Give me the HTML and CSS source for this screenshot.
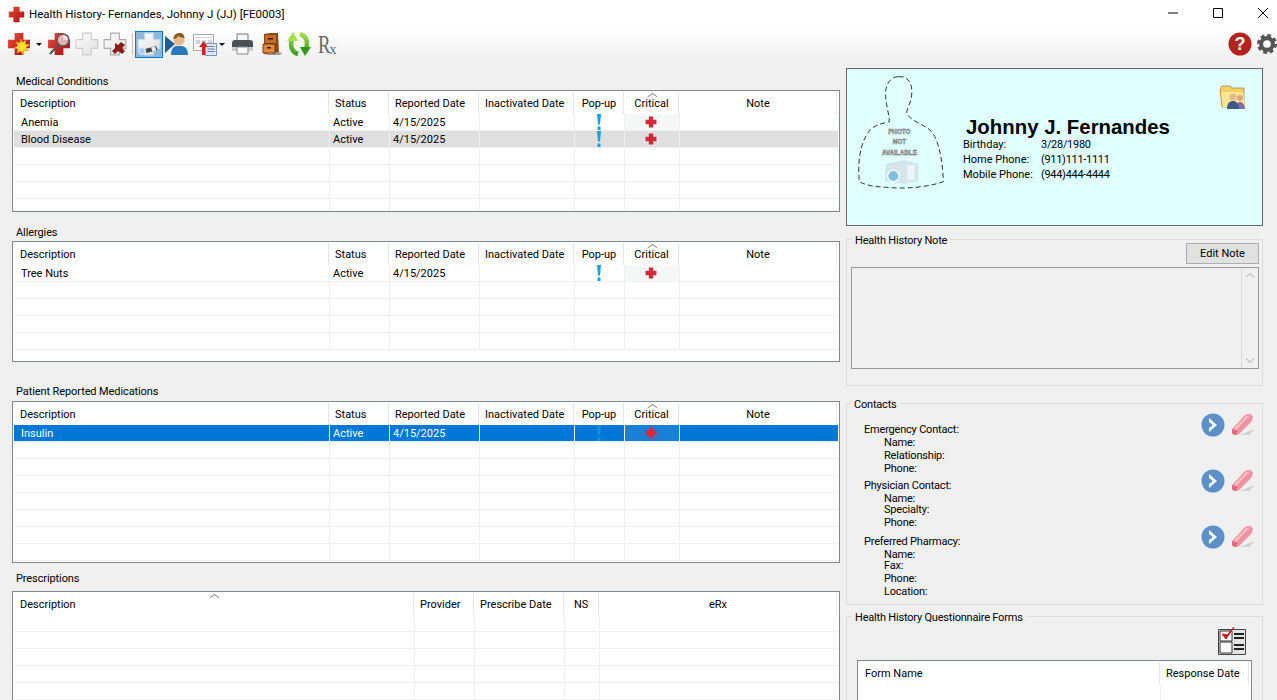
FILE: index.html
```html
<!DOCTYPE html>
<html lang="en">
<head>
	<meta charset="UTF-8">
	<title>Health History</title>
	<link rel="stylesheet" href="styles.css">
</head>
<body>
	<svg class="defs" width="0" height="0">
		<defs>
			<linearGradient id="red" x1="0" y1="0" x2="1" y2="1">
				<stop offset="0" stop-color="#ec4a3c"/>
				<stop offset="1" stop-color="#a50d10"/>
			</linearGradient>
			<linearGradient id="pale" x1="0" y1="0" x2="1" y2="1">
				<stop offset="0" stop-color="#ffffff"/>
				<stop offset="1" stop-color="#dcdcdc"/>
			</linearGradient>
			<linearGradient id="green" gradientUnits="userSpaceOnUse" x1="0" y1="0" x2="0" y2="24">
				<stop offset="0" stop-color="#a6e04a"/>
				<stop offset="1" stop-color="#2f9a1c"/>
			</linearGradient>
			<symbol id="cross" viewBox="1 1 22 22">
				<path d="M8 2h8v6h6v8h-6v6H8v-6H2V8h6z" stroke-linejoin="round"/>
			</symbol>
			<symbol id="bang" viewBox="0 0 6 16">
				<path d="M1 0h4L4 10.500H2zM1.500 12.500h3V16h-3z"/>
			</symbol>
			<symbol id="go" viewBox="0 0 24 24">
				<circle cx="12" cy="12" r="11.500" fill="#5b90c8"/>
				<path d="M8 5l8 7-8 7v-4l4-3-4-3z" fill="#fff"/>
			</symbol>
			<symbol id="eraser" viewBox="0 0 24 24">
				<path d="M9 22l15-6-6 6z" fill="#cfcfcf"/>
				<path d="M1 16L14 2q2-1 5-1l3 2-1 5L9 20q-3 3-6 2l-2-2z" fill="#f2919f"/>
				<path d="M3 15L15 3l4-.5-2 2L5 17z" fill="#f8bcc5"/>
				<path d="M1 16l6 2-3 4-1 0-2-2z" fill="#e0687e"/>
			</symbol>
		</defs>
	</svg>

	<div class="titlebar">
		<svg class="app-icon" width="17" height="17"><use href="#cross" fill="url(#red)"/></svg>
		<span class="title">Health History- Fernandes, Johnny J (JJ) [FE0003]</span>
		<div class="win-btns">
			<svg width="10" height="10" viewBox="0 0 10 10"><path d="M0 5h10" stroke="#000"/></svg>
			<svg width="10" height="10" viewBox="0 0 10 10"><path d="M.5.5h9v9h-9z" fill="none" stroke="#000"/></svg>
			<svg width="10" height="10" viewBox="0 0 10 10"><path d="M0 0l10 10M10 0L0 10" stroke="#000"/></svg>
		</div>
	</div>

	<div class="toolbar">
		<svg class="tool" width="24" height="24" viewBox="0 0 24 24">
			<use href="#cross" fill="url(#red)" width="24" height="24"/>
			<path d="M14 7l1.500 3.500L19 8l-1 4 5 1-4 2 2 4-4-1-1 5-2-4-4 2 1-4-4-1 4-2-2-4 4 1z" fill="#ffe22e" stroke="#f08a18" stroke-width=".7"/>
		</svg>
		<span class="caret"></span>
		<svg class="tool" width="24" height="24" viewBox="0 0 24 24">
			<use href="#cross" fill="url(#red)" width="24" height="24"/>
			<circle cx="16" cy="8" r="6" fill="#f4dcdc" fill-opacity=".75" stroke="#555" stroke-width="1.600"/>
			<path d="M11.500 12.500L3 22" stroke="#555" stroke-width="2.200"/>
		</svg>
		<svg class="tool" width="24" height="24" viewBox="0 0 24 24"><use href="#cross" fill="url(#pale)" stroke="#ccc" width="24" height="24"/></svg>
		<svg class="tool tool-last" width="24" height="24" viewBox="0 0 24 24">
			<use href="#cross" fill="url(#pale)" stroke="#aaa" width="24" height="24"/>
			<path d="M12 11l3 2 3-3 4 3-3 3 3 3-3 3-4-3-3 3-3-3 3-3z" fill="#8e1c14"/>
		</svg>
		<span class="sep"></span>
		<span class="tool-on">
			<svg width="24" height="24" viewBox="0 0 24 24">
				<use href="#cross" fill="url(#pale)" stroke="#c8d8e8" width="24" height="24"/>
				<path d="M8 17l11-3 1.500 4-11 3z" fill="#444"/>
				<path d="M14 15.500l4-1 1.500 4-4 1z" fill="#eee"/>
				<circle cx="5" cy="19" r="3.500" fill="#a8d0f0" stroke="#eef"/>
			</svg>
		</span>
		<svg class="tool tool-person" width="24" height="24" viewBox="0 0 24 24">
			<path d="M0 4l10 8-10 9z" fill="#1f5f96"/>
			<path d="M6 23c0-7 3-9 6-9h4c4 0 7 3 7 9z" fill="#2a78c0"/>
			<circle cx="14" cy="8" r="5.500" fill="#e8b888"/>
			<path d="M8.500 7c0-4 3-6 6-6s5 2 5 5c-3 0-6-2-7-2 0 2-2 3-4 3z" fill="#8a5a20"/>
		</svg>
		<svg class="tool-form" width="24" height="24" viewBox="0 0 24 24">
			<path d="M.500 2.500h20v16H.500z" fill="#fff" stroke="#aaa"/>
			<path d="M2 5h17v1H2zM3 8h4v4H3zM9 8h4v4H9zM15 8h4v4h-4z" fill="#cfd4dc"/>
			<path d="M12.500 11.500h11v12h-11z" fill="#dce6f4" stroke="#7f95b8"/>
			<path d="M14.500 14.500h7M14.500 17h7M14.500 19.500h7" stroke="#6a7fa0"/>
			<path d="M9 23v-8H6l4.500-6 4.500 6h-3v8z" fill="#d81e1e"/>
		</svg>
		<span class="caret caret-form"></span>
		<svg class="tool-print" width="24" height="24" viewBox="0 0 24 24">
			<path d="M6 2h11v7H6z" fill="#f6f6f6" stroke="#777"/>
			<path d="M1 11c0-2 1-3 3-3h15c2 0 3 1 3 3v7H1z" fill="#48505a"/>
			<path d="M1 15h21v4H1z" fill="#c8ccd0"/>
			<path d="M6 15h11v7H6z" fill="#fafafa" stroke="#888"/>
		</svg>
		<svg class="tool-cabinet" width="20" height="24" viewBox="0 0 20 24">
			<path d="M2 23l16 0 2-2-4-1z" fill="#999"/>
			<path d="M2 2l6-1h8l1 19-15 2z" fill="#8a4a18"/>
			<path d="M3 3h11v8H3z" fill="#c46a22"/>
			<path d="M1 12h12v9H1z" fill="#e08a38" stroke="#5a2a08" stroke-width=".8"/>
			<path d="M6 6h5v1.500H6zM5 15h4v1.500H5z" fill="#3a1a04"/>
		</svg>
		<svg class="tool-green" width="24" height="24" viewBox="0 0 24 24">
			<path d="M11 22C4 20 3 13 5 7" fill="none" stroke="url(#green)" stroke-width="4.500"/>
			<path d="M0 9L6 0l5 9z" fill="#a6e04a"/>
			<path d="M13 2c7 2 8 9 6 15" fill="none" stroke="url(#green)" stroke-width="4.500"/>
			<path d="M13 15h11l-6 9z" fill="#2f9a1c"/>
		</svg>
		<svg class="tool-rx" width="20" height="24" viewBox="0 0 20 24">
			<text class="rx-r" transform="scale(.72 1)" x="0" y="21">R</text>
			<text class="rx-x" x="11.500" y="22">x</text>
		</svg>
		<div class="tool-right">
			<svg width="24" height="24" viewBox="0 0 24 24">
				<circle cx="12" cy="12" r="11.500" fill="#b5211c"/>
				<text class="help-q" x="12" y="18">?</text>
			</svg>
			<svg width="20" height="22" viewBox="0 0 22 22">
				<circle cx="11" cy="11" r="6.500" fill="none" stroke="#555" stroke-width="4.500"/>
				<circle cx="11" cy="11" r="9.500" fill="none" stroke="#555" stroke-width="3" stroke-dasharray="4.200 3.260"/>
			</svg>
		</div>
	</div>

	<div class="main">
		<div class="left">
			<div class="section">
				<p class="sec-label">Medical Conditions</p>
				<div class="grid-box h-med">
					<table class="grid">
						<colgroup><col class="c1"><col class="c2"><col class="c3"><col class="c4"><col class="c5"><col class="c6"><col></colgroup>
						<tr><th>Description</th><th>Status</th><th>Reported Date</th><th>Inactivated Date</th><th class="mid">Pop-up</th><th class="mid sorted">Critical</th><th class="mid">Note</th></tr>
						<tr><td class="first">Anemia</td><td>Active</td><td>4/15/2025</td><td></td><td class="mid"><svg class="bang" width="6" height="16"><use href="#bang"/></svg></td><td class="mid crit"><svg class="plus" width="12" height="12"><use href="#cross"/></svg></td><td></td></tr>
						<tr class="row-gray"><td class="first">Blood Disease</td><td>Active</td><td>4/15/2025</td><td></td><td class="mid"><svg class="bang" width="6" height="16"><use href="#bang"/></svg></td><td class="mid"><svg class="plus" width="12" height="12"><use href="#cross"/></svg></td><td></td></tr>
						<tr><td></td><td></td><td></td><td></td><td></td><td></td><td></td></tr>
						<tr><td></td><td></td><td></td><td></td><td></td><td></td><td></td></tr>
						<tr><td></td><td></td><td></td><td></td><td></td><td></td><td></td></tr>
						<tr><td></td><td></td><td></td><td></td><td></td><td></td><td></td></tr>
					</table>
				</div>
			</div>

			<div class="section sec-allergies">
				<p class="sec-label">Allergies</p>
				<div class="grid-box h-all">
					<table class="grid">
						<colgroup><col class="c1"><col class="c2"><col class="c3"><col class="c4"><col class="c5"><col class="c6"><col></colgroup>
						<tr><th>Description</th><th>Status</th><th>Reported Date</th><th>Inactivated Date</th><th class="mid">Pop-up</th><th class="mid sorted">Critical</th><th class="mid">Note</th></tr>
						<tr><td class="first">Tree Nuts</td><td>Active</td><td>4/15/2025</td><td></td><td class="mid"><svg class="bang" width="6" height="16"><use href="#bang"/></svg></td><td class="mid crit"><svg class="plus" width="12" height="12"><use href="#cross"/></svg></td><td></td></tr>
						<tr><td></td><td></td><td></td><td></td><td></td><td></td><td></td></tr>
						<tr><td></td><td></td><td></td><td></td><td></td><td></td><td></td></tr>
						<tr><td></td><td></td><td></td><td></td><td></td><td></td><td></td></tr>
						<tr><td></td><td></td><td></td><td></td><td></td><td></td><td></td></tr>
					</table>
				</div>
			</div>

			<div class="section sec-meds">
				<p class="sec-label">Patient Reported Medications</p>
				<div class="grid-box h-meds">
					<table class="grid">
						<colgroup><col class="c1"><col class="c2"><col class="c3"><col class="c4"><col class="c5"><col class="c6"><col></colgroup>
						<tr><th>Description</th><th>Status</th><th>Reported Date</th><th>Inactivated Date</th><th class="mid">Pop-up</th><th class="mid sorted">Critical</th><th class="mid">Note</th></tr>
						<tr class="row-sel"><td class="first">Insulin</td><td>Active</td><td>4/15/2025</td><td></td><td class="mid"><svg class="bang" width="6" height="16"><use href="#bang"/></svg></td><td class="mid crit"><svg class="plus" width="12" height="12"><use href="#cross"/></svg></td><td></td></tr>
						<tr><td></td><td></td><td></td><td></td><td></td><td></td><td></td></tr>
						<tr><td></td><td></td><td></td><td></td><td></td><td></td><td></td></tr>
						<tr><td></td><td></td><td></td><td></td><td></td><td></td><td></td></tr>
						<tr><td></td><td></td><td></td><td></td><td></td><td></td><td></td></tr>
						<tr><td></td><td></td><td></td><td></td><td></td><td></td><td></td></tr>
						<tr><td></td><td></td><td></td><td></td><td></td><td></td><td></td></tr>
						<tr><td></td><td></td><td></td><td></td><td></td><td></td><td></td></tr>
					</table>
				</div>
			</div>

			<div class="section sec-rx">
				<p class="sec-label">Prescriptions</p>
				<div class="grid-box h-rx">
					<table class="grid">
						<colgroup><col class="p1"><col class="p2"><col class="p3"><col class="p4"><col></colgroup>
						<tr><th class="sorted">Description</th><th>Provider</th><th>Prescribe Date</th><th class="ns">NS</th><th class="mid">eRx</th></tr>
						<tr><td></td><td></td><td></td><td></td><td></td></tr>
						<tr><td></td><td></td><td></td><td></td><td></td></tr>
						<tr><td></td><td></td><td></td><td></td><td></td></tr>
						<tr><td></td><td></td><td></td><td></td><td></td></tr>
						<tr><td></td><td></td><td></td><td></td><td></td></tr>
					</table>
				</div>
			</div>
		</div>

		<div class="right">
			<div class="card">
				<svg class="photo" width="110" height="125" viewBox="0 0 330 375">
					<path class="outline" d="M145 20C175 18 188 40 185 75C183 100 170 115 170 130C185 155 215 160 240 180C262 200 278 260 280 335C240 350 170 358 110 352C70 350 45 345 28 335C22 280 30 215 60 180C80 160 105 160 118 155C118 130 105 100 107 65C108 40 125 20 145 20Z"/>
					<text class="photo-txt" x="148" y="192">PHOTO</text>
					<text class="photo-txt" x="148" y="222">NOT</text>
					<text class="photo-txt" x="148" y="254">AVAILABLE</text>
					<path d="M108 282l55-10 40 10v50l-40 8-55-6z" fill="#d4e6ec" stroke="#b8d0d8"/>
					<circle cx="130" cy="318" r="17" fill="#7fc0e0" stroke="#fff" stroke-width="4"/>
					<path d="M172 285h22v44h-22z" fill="#eef6f8"/>
				</svg>
				<div class="info">
					<div class="name">Johnny J. Fernandes</div>
					<div class="line"><span class="key">Birthday:</span><span class="val">3/28/1980</span></div>
					<div class="line"><span class="key">Home Phone:</span><span class="val">(911)111-1111</span></div>
					<div class="line"><span class="key">Mobile Phone:</span><span class="val">(944)444-4444</span></div>
				</div>
				<svg class="folder" width="30" height="26" viewBox="0 0 30 26">
					<path d="M1 5l2-3h8l2 2h12v19H3z" fill="#f3cf68" stroke="#b28a30" stroke-width=".8"/>
					<path d="M2 8h22l2 15H4z" fill="#ffe590"/>
					<circle cx="21" cy="14" r="3" fill="#d8a880"/>
					<path d="M17 25c0-5 2-7 4-7s5 2 5 7z" fill="#8a6aa0"/>
					<circle cx="14" cy="13" r="3.500" fill="#e4b890"/>
					<path d="M8 25c0-6 3-8 6-8s6 2 6 8z" fill="#3a5a8c"/>
				</svg>
			</div>

			<fieldset class="group g-note">
				<legend>Health History Note</legend>
				<div class="note-top"><button class="btn">Edit Note</button></div>
				<div class="note-box">
					<div class="note-bar">
						<svg width="8" height="5" viewBox="0 0 8 5"><path d="M0 4.500l4-4 4 4" fill="none" stroke="#a0a0a0"/></svg>
						<svg width="8" height="5" viewBox="0 0 8 5"><path d="M0 .5l4 4 4-4" fill="none" stroke="#a0a0a0"/></svg>
					</div>
				</div>
			</fieldset>

			<fieldset class="group g-contacts">
				<legend>Contacts</legend>
				<div class="contacts">
					<div class="c-text">
						<p>Emergency Contact:</p>
						<p class="c-sub">Name:</p>
						<p class="c-sub">Relationship:</p>
						<p class="c-sub">Phone:</p>
						<p class="c-gap">Physician Contact:</p>
						<p class="c-sub">Name:</p>
						<p class="c-sub c-tight">Specialty:</p>
						<p class="c-sub">Phone:</p>
						<p class="c-gap2">Preferred Pharmacy:</p>
						<p class="c-sub">Name:</p>
						<p class="c-sub c-tight">Fax:</p>
						<p class="c-sub">Phone:</p>
						<p class="c-sub">Location:</p>
					</div>
					<div class="c-actions">
						<div class="c-pair"><svg width="24" height="24"><use href="#go"/></svg><svg width="24" height="24"><use href="#eraser"/></svg></div>
						<div class="c-pair"><svg width="24" height="24"><use href="#go"/></svg><svg width="24" height="24"><use href="#eraser"/></svg></div>
						<div class="c-pair"><svg width="24" height="24"><use href="#go"/></svg><svg width="24" height="24"><use href="#eraser"/></svg></div>
					</div>
				</div>
			</fieldset>

			<fieldset class="group g-forms">
				<legend>Health History Questionnaire Forms</legend>
				<div class="forms-top">
					<svg width="28" height="28" viewBox="0 0 28 28">
						<path d="M.5 2.500h27v25H.5z" fill="#e4e4e4" stroke="#444"/>
						<path d="M2 4h12v10H2z" fill="#fff" stroke="#333"/>
						<path d="M2 15h12v11H2z" fill="#fff" stroke="#333"/>
						<path d="M16 6h10v2H16zM16 10h10v2H16zM16 17h10v2H16zM16 21h10v2H16z" fill="#222"/>
						<path d="M4 7l4 5 8-12-7 8z" fill="#d01818" stroke="#d01818"/>
					</svg>
				</div>
				<div class="grid-box form-grid">
					<table class="grid">
						<colgroup><col class="f1"><col class="f2"></colgroup>
						<tr><th class="form-name">Form Name</th><th>Response Date</th></tr>
						<tr><td></td><td></td></tr>
					</table>
				</div>
			</fieldset>
		</div>
	</div>
</body>
</html>
```

FILE: styles.css
```css
*{
	margin: 0;
	padding: 0;
	box-sizing: border-box;
}
html, body{
	height: 700px;
	overflow: hidden;
}
body{
	background-color: #f0f0f0;
	font-family: Roboto, "Noto Sans", sans-serif;
	font-size: 11px;
	color: #000;
}
.defs{
	position: absolute;
}

/* title bar */
.titlebar{
	display: flex;
	align-items: center;
	height: 28px;
	padding: 0 9px 0 8px;
	background-color: #fff;
}
.app-icon{
	margin-right: 4px;
}
.title{
	font-size: 11.500px;
}
.win-btns{
	display: flex;
	gap: 35px;
	margin: 0 0 2px auto;
}

/* tool bar */
.toolbar{
	display: flex;
	align-items: center;
	height: 32px;
	padding-left: 7px;
	background: linear-gradient(#fff, #f0f0f0);
}
.tool{
	margin-right: 4px;
}
.tool-last{
	margin-right: 5px;
}
.caret{
	width: 6px;
	height: 3px;
	margin: 0 5px 0 1px;
	border: 3px solid transparent;
	border-top: 3px solid #111;
	border-bottom: none;
}
.caret-form{
	margin: 0 6px 0 2px;
}
.sep{
	width: 1px;
	height: 22px;
	margin-right: 2px;
	background-color: #c4c4c4;
}
.tool-on{
	display: flex;
	align-items: center;
	justify-content: center;
	width: 28px;
	height: 27px;
	margin-right: 2px;
	border: 1px solid #0078d7;
	background-color: #8db8dc;
}
.tool-print{
	margin-right: 7px;
}
.tool-cabinet{
	margin-right: 5px;
}
.tool-green{
	margin-right: 7px;
}
.tool-rx{
	overflow: visible;
}
.rx-r{
	font-family: "Liberation Serif", serif;
	font-size: 26px;
	fill: #666;
}
.rx-x{
	font-family: "Liberation Serif", serif;
	font-size: 14px;
	fill: #666;
}
.tool-right{
	display: flex;
	align-items: center;
	gap: 5px;
	margin-left: auto;
}
.help-q{
	font-family: "Liberation Sans", sans-serif;
	font-size: 18px;
	font-weight: bold;
	fill: #fff;
	text-anchor: middle;
}

/* main layout */
.main{
	display: flex;
	gap: 6px;
	padding-left: 12px;
}
.left{
	flex: none;
	width: 828px;
}
.right{
	flex: none;
	width: 417px;
	padding-top: 8px;
}
.sec-label{
	height: 16px;
	padding-left: 4px;
	line-height: 16px;
	letter-spacing: -.1px;
}
.section:first-child{
	padding-top: 14px;
}
.sec-allergies{
	margin-top: 13px;
}
.sec-meds{
	margin-top: 22px;
}
.sec-meds .sec-label{
	height: 17px;
}
.sec-rx{
	margin-top: 8px;
}
.sec-rx .sec-label{
	height: 20px;
}

/* grids */
.grid-box{
	padding: 1px;
	border: 1px solid #80888f;
	background-color: #fff;
	overflow: hidden;
}
.h-med{
	height: 122px;
}
.h-all{
	height: 121px;
}
.h-meds{
	height: 162px;
}
.h-rx{
	height: 130px;
}
.grid{
	table-layout: fixed;
	width: 100%;
	border-collapse: separate;
	border-spacing: 0;
}
.c1{ width: 316px; }
.c2{ width: 60px; }
.c3{ width: 90px; }
.c4{ width: 95px; }
.c5{ width: 50px; }
.c6{ width: 55px; }
.p1{ width: 401px; }
.p2{ width: 60px; }
.p3{ width: 90px; }
.p4{ width: 35px; }
.f1{ width: 302px; }
.grid th{
	position: relative;
	height: 22px;
	padding: 0 0 0 5px;
	font-weight: normal;
	text-align: left;
	background: linear-gradient(#e6e6e6, #e6e6e6) no-repeat calc(100% - 1px) 0 / 1px 100%;
}
.grid th:first-child{
	padding-left: 6px;
}
.grid th.mid{
	padding-left: 0;
	padding-right: 2px;
	text-align: center;
}
.grid th.ns{
	padding-left: 9px;
}
.grid th.sorted::before{
	content: "";
	position: absolute;
	left: 50%;
	top: 1px;
	width: 6px;
	height: 6px;
	margin-left: -4px;
	border-top: 1px solid #777;
	border-left: 1px solid #777;
	transform: scaleY(.7) rotate(45deg);
}
.grid td{
	height: 17px;
	padding: 2px 0 0 3px;
	border-right: 1px solid #f0f0f0;
	border-bottom: 1px solid #f0f0f0;
	line-height: 14px;
	white-space: nowrap;
}
.grid td:last-child{
	border-right: none;
}
.grid td.first{
	padding-left: 7px;
}
.grid td.mid{
	padding: 0 2px 0 0;
	text-align: center;
	vertical-align: top;
	line-height: 0;
}
.grid td.crit{
	background-color: #f6f8f8;
}
.bang{
	fill: #1e9fdc;
}
.plus{
	margin-top: 2px;
	fill: #d32a36;
}
.row-gray td{
	background-color: #dfdfdf;
}
.row-sel td{
	background-color: #0078d7;
	color: #fff;
}
.grid .row-sel td.crit{
	background-color: #1a80d6;
}
.row-sel .bang{
	fill: #1690dc;
}

/* patient card */
.card{
	position: relative;
	display: flex;
	height: 158px;
	padding: 1px 0 0 3px;
	border: 1px solid #666;
	background-color: #e0ffff;
}
.photo{
	flex: none;
}
.outline{
	fill: none;
	stroke: #333;
	stroke-width: 3;
	stroke-dasharray: 15 9;
}
.photo-txt{
	font-family: "Liberation Sans", sans-serif;
	font-size: 19px;
	font-weight: bold;
	fill: #fff;
	stroke: #666;
	stroke-width: 1.500;
	text-anchor: middle;
}
.info{
	padding: 45px 0 0 3px;
}
.name{
	margin-left: 3px;
	height: 22px;
	font-family: "Liberation Sans", Arial, sans-serif;
	font-size: 20.400px;
	font-weight: bold;
	line-height: 24px;
}
.line{
	display: flex;
	height: 15px;
	line-height: 15px;
}
.key{
	width: 78px;
}
.val{
	letter-spacing: -.3px;
}
.folder{
	position: absolute;
	right: 13px;
	top: 15px;
}

/* group boxes */
.group{
	border: 1px solid #dcdcdc;
	min-width: 0;
}
.group legend{
	height: 14px;
	margin-left: 5px;
	padding: 0 3px;
	line-height: 18px;
	letter-spacing: -.2px;
}
.g-note{
	height: 154px;
	margin-top: 6px;
}
.note-top{
	display: flex;
	justify-content: flex-end;
	margin: -3px 3px 0 0;
}
.btn{
	width: 73px;
	height: 21px;
	border: 1px solid #adadad;
	background-color: #e1e1e1;
	font-family: inherit;
	font-size: 11px;
	color: #000;
}
.note-box{
	display: flex;
	justify-content: flex-end;
	height: 102px;
	margin: 3px 3px 0 4px;
	border: 1px solid #999;
}
.note-bar{
	display: flex;
	flex-direction: column;
	justify-content: space-between;
	align-items: center;
	width: 17px;
	padding: 5px 0;
	border-left: 1px solid #dcdcdc;
}
.g-contacts{
	height: 209px;
	margin-top: 10px;
}
.g-contacts legend{
	margin-left: 4px;
}
.contacts{
	display: flex;
	justify-content: space-between;
	padding: 0 7px 0 17px;
}
.c-text{
	padding-top: 13px;
	letter-spacing: -.2px;
}
.c-text p{
	height: 13px;
	line-height: 13px;
}
.c-sub{
	padding-left: 20px;
}
.c-text .c-gap{
	margin-top: 4px;
}
.c-text .c-gap2{
	margin-top: 6px;
}
.c-text .c-tight{
	margin-top: -2px;
}
.c-actions{
	display: flex;
	flex-direction: column;
	gap: 32px;
	margin-top: 3px;
}
.c-pair{
	display: flex;
	gap: 6px;
}
.g-forms{
	height: 120px;
	margin-top: 4px;
}
.forms-top{
	display: flex;
	justify-content: flex-end;
	margin-top: 4px;
	padding-right: 16px;
}
.form-grid{
	height: 70px;
	margin: 5px 10px 0;
}
.grid th.form-name{
	padding-left: 6px;
}
```
